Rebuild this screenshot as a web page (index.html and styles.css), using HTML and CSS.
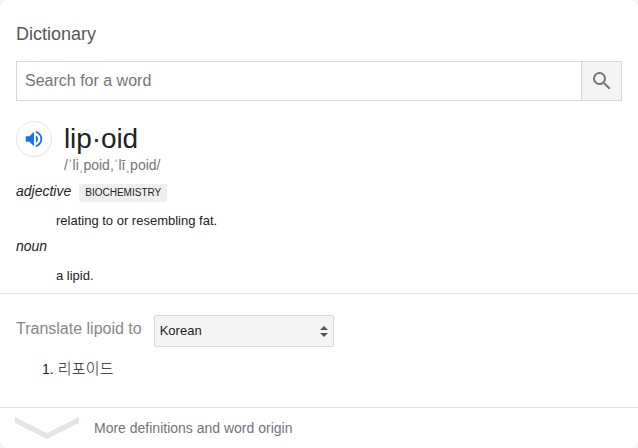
FILE: index.html
```html
<!DOCTYPE html>
<html lang="en">
<head>
<meta charset="utf-8">
<title>Dictionary</title>
<link rel="stylesheet" href="styles.css">
</head>
<body>
<main class="card">
  <section class="entry">
    <h1 class="title">Dictionary</h1>
    <form class="search">
      <input class="search-input" type="text" placeholder="Search for a word">
      <button class="search-button" type="button" aria-label="Search">
        <svg width="24" height="24" viewBox="0 0 24 24" fill="#757575"><path d="M15.5 14h-.79l-.28-.27A6.47 6.47 0 0 0 16 9.5 6.5 6.5 0 1 0 9.5 16c1.61 0 3.09-.59 4.23-1.57l.27.28v.79l5 4.99L20.49 19l-4.99-5zm-6 0C7.01 14 5 11.99 5 9.5S7.01 5 9.5 5 14 7.01 14 9.5 11.99 14 9.5 14z"/></svg>
      </button>
    </form>
    <div class="headword">
      <button class="speaker" type="button" aria-label="Listen">
        <svg width="22" height="22" viewBox="0 0 24 24" fill="#1a73e8"><path d="M3 9v6h4l5 5V4L7 9H3zm13.5 3A4.5 4.5 0 0 0 14 7.97v8.05c1.48-.73 2.5-2.25 2.5-4.02zM14 3.23v2.06c2.89.86 5 3.54 5 6.71s-2.11 5.85-5 6.71v2.06c4.01-.91 7-4.49 7-8.77s-2.99-7.86-7-8.77z"/></svg>
      </button>
      <div>
        <div class="word">lip·oid</div>
        <div class="phonetic">/ˈliˌpoid,ˈlīˌpoid/</div>
      </div>
    </div>
    <div class="pos-row"><i class="pos">adjective</i><span class="tag">BIOCHEMISTRY</span></div>
    <p class="definition">relating to or resembling fat.</p>
    <div class="pos-row noun"><i class="pos">noun</i></div>
    <p class="definition">a lipid.</p>
  </section>
  <section class="translate">
    <div class="translate-row">
      <span class="translate-label">Translate lipoid to</span>
      <button class="select" type="button">
        <span class="select-value">Korean</span>
        <svg width="8" height="11" viewBox="0 0 8 11" fill="#555"><path d="M0 4 4 0l4 4zM0 7h8l-4 4z"/></svg>
      </button>
    </div>
    <div class="translation"><span>1.</span><span class="korean" lang="ko">리포이드</span></div>
  </section>
  <footer class="more">
    <svg width="64" height="23" viewBox="0 0 64 23" fill="#e4e4e4"><path d="M0 0 32 16 64 0v6L32 22 0 6z"/></svg>
    <span>More definitions and word origin</span>
  </footer>
</main>
</body>
</html>
```
FILE: styles.css
```css
* { box-sizing: border-box; }
body {
  margin: 0;
  background: #f3f3f3;
  font-family: "Liberation Sans", Arial, "Noto Sans CJK KR", sans-serif;
  color: #222;
}
button { font: inherit; color: inherit; padding: 0; }
.card {
  height: 448px;
  background: #fff;
  border-radius: 8px;
  display: flex;
  flex-direction: column;
  overflow: hidden;
}
.entry { height: 294px; padding: 23px 16px 0; border-bottom: 1px solid #e4e4e4; }
.title { margin: 0 0 16px; font-size: 18px; line-height: 22px; font-weight: 400; color: #575757; }
.search { display: flex; height: 40px; border: 1px solid #d7d7d7; }
.search-input {
  flex: 1;
  min-width: 0;
  border: 0;
  padding: 0 8px;
  font: 16px "Liberation Sans", Arial, sans-serif;
  outline: 0;
}
.search-input::placeholder { color: #757575; }
.search-button {
  width: 40px;
  border: 0;
  border-left: 1px solid #d7d7d7;
  background: #f4f4f4;
  display: flex;
  align-items: center;
  justify-content: center;
}
.headword { display: flex; gap: 12px; margin-top: 20px; height: 55px; }
.speaker {
  width: 36px;
  height: 36px;
  border: 1px solid #e2e4e8;
  border-radius: 50%;
  background: #fff;
  display: flex;
  align-items: center;
  justify-content: center;
}
.word { font-size: 28px; line-height: 36px; letter-spacing: -0.1px; }
.phonetic { font-size: 14px; line-height: 17px; color: #757575; }
.pos-row { display: flex; align-items: center; gap: 8px; height: 32px; }
.pos { font-size: 14px; line-height: 18px; padding-bottom: 2px; }
.tag {
  height: 18px;
  padding: 0 6px;
  margin-top: 2px;
  border-radius: 2px;
  background: #eee;
  font-size: 10px;
  line-height: 18px;
}
.definition { margin: 4px 0 0 40px; font-size: 13px; line-height: 18px; }
.noun { height: 18px; margin-top: 8px; }
.noun + .definition { margin-top: 11px; }
.translate { height: 113px; padding: 21px 16px 0; }
.translate-row { display: flex; align-items: center; gap: 12px; height: 32px; }
.translate-label { font-size: 16px; line-height: 20px; margin-top: -4px; color: #878787; }
.select {
  display: flex;
  align-items: center;
  justify-content: space-between;
  width: 180px;
  height: 32px;
  padding: 0 5px;
  border: 1px solid #d7d7d7;
  border-radius: 2px;
  background: #f4f4f4;
  font-size: 13px;
}
.select-value { padding-bottom: 2px; }
.translation { display: flex; gap: 4px; margin: 12px 0 0 26px; font-size: 14px; line-height: 20px; }
.korean { margin-top: -1px; font-family: "Noto Sans CJK KR", sans-serif; font-size: 15px; font-weight: 300; letter-spacing: 0.2px; }
.more {
  display: flex;
  align-items: center;
  gap: 15px;
  height: 41px;
  padding-left: 15px;
  border-top: 1px solid #e4e4e4;
  font-size: 14px;
  color: #70757a;
}
```
